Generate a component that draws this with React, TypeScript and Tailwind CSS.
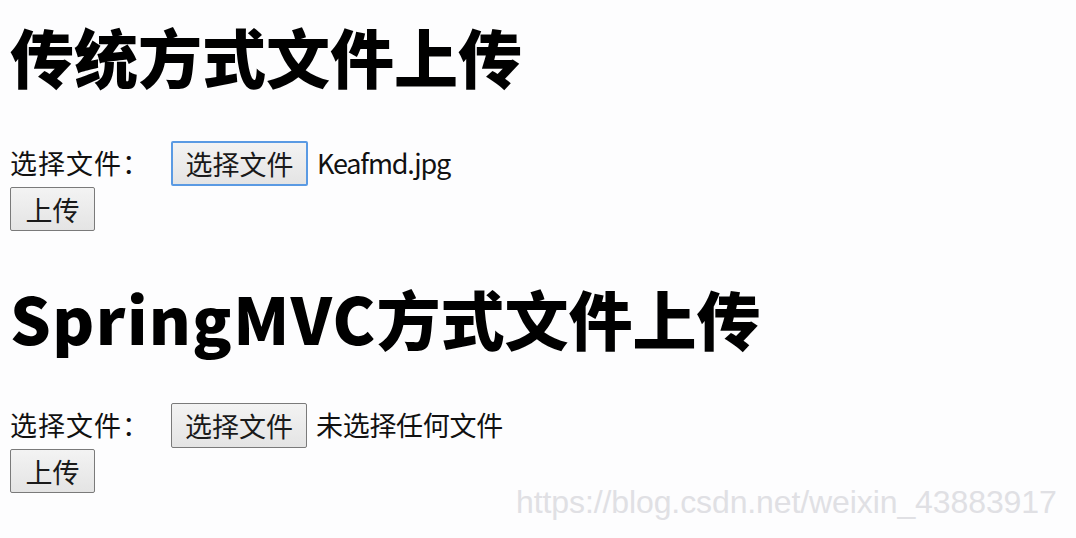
const cjk = "font-['Microsoft_YaHei','Noto_Sans_CJK_SC',sans-serif]";

type FileRowProps = {
  fileName?: string;
  focused?: boolean;
};

const FileRow = ({ fileName, focused }: FileRowProps) => {
  return (
    <div className="flex flex-col items-start">
      <div className="flex h-[45px] items-center text-[27px] text-[#111]">
        <span className="tracking-[1px]">选择文件：</span>
        <button
          type="button"
          className={
            focused
              ? "ml-[21px] flex h-[45px] w-[137px] items-center justify-center rounded-[2px] border-2 border-[#5a9ae3] bg-gradient-to-b from-[#f3f3f3] to-[#e4e4e4] text-[27px] leading-none text-[#1a1a1a]"
              : "ml-[21px] flex h-[45px] w-[136px] items-center justify-center rounded-[2px] border border-[#7a7a7a] bg-gradient-to-b from-[#f3f3f3] to-[#e4e4e4] text-[27px] leading-none text-[#1a1a1a]"
          }
        >
          选择文件
        </button>
        {fileName ? (
          <span className="ml-[9px] tracking-[-1.2px]">{fileName}</span>
        ) : (
          <span className="ml-[9px] tracking-[-0.3px]">未选择任何文件</span>
        )}
      </div>
      <button
        type="button"
        className="mt-px flex h-[44px] w-[85px] items-center justify-center rounded-[2px] border border-[#7a7a7a] bg-gradient-to-b from-[#f3f3f3] to-[#e4e4e4] text-[27px] leading-none text-[#1a1a1a]"
      >
        上传
      </button>
    </div>
  );
};

export default function App() {
  return (
    <div className={`relative h-[538px] w-[1076px] overflow-hidden bg-[#fdfdfe] pl-[10px] pt-[23px] ${cjk}`}>
      <h1 className="h-[64px] text-[64px] font-black leading-[64px] text-black">传统方式文件上传</h1>
      <div className="mt-[54px]">
        <FileRow fileName="Keafmd.jpg" focused />
      </div>
      <h1 className="mt-[54px] h-[64px] text-[64px] font-black leading-[64px] text-black">
        <span className="tracking-[1.4px]">SpringMVC</span>方式文件上传
      </h1>
      <div className="mt-[54px]">
        <FileRow />
      </div>
      <div className="absolute left-[516px] top-[484px] font-['Liberation_Sans',Arial,sans-serif] text-[32px] leading-[36px] tracking-[-0.1px] text-[#e0e0e4]">
        https://blog.csdn.net/weixin_43883917
      </div>
    </div>
  );
}
